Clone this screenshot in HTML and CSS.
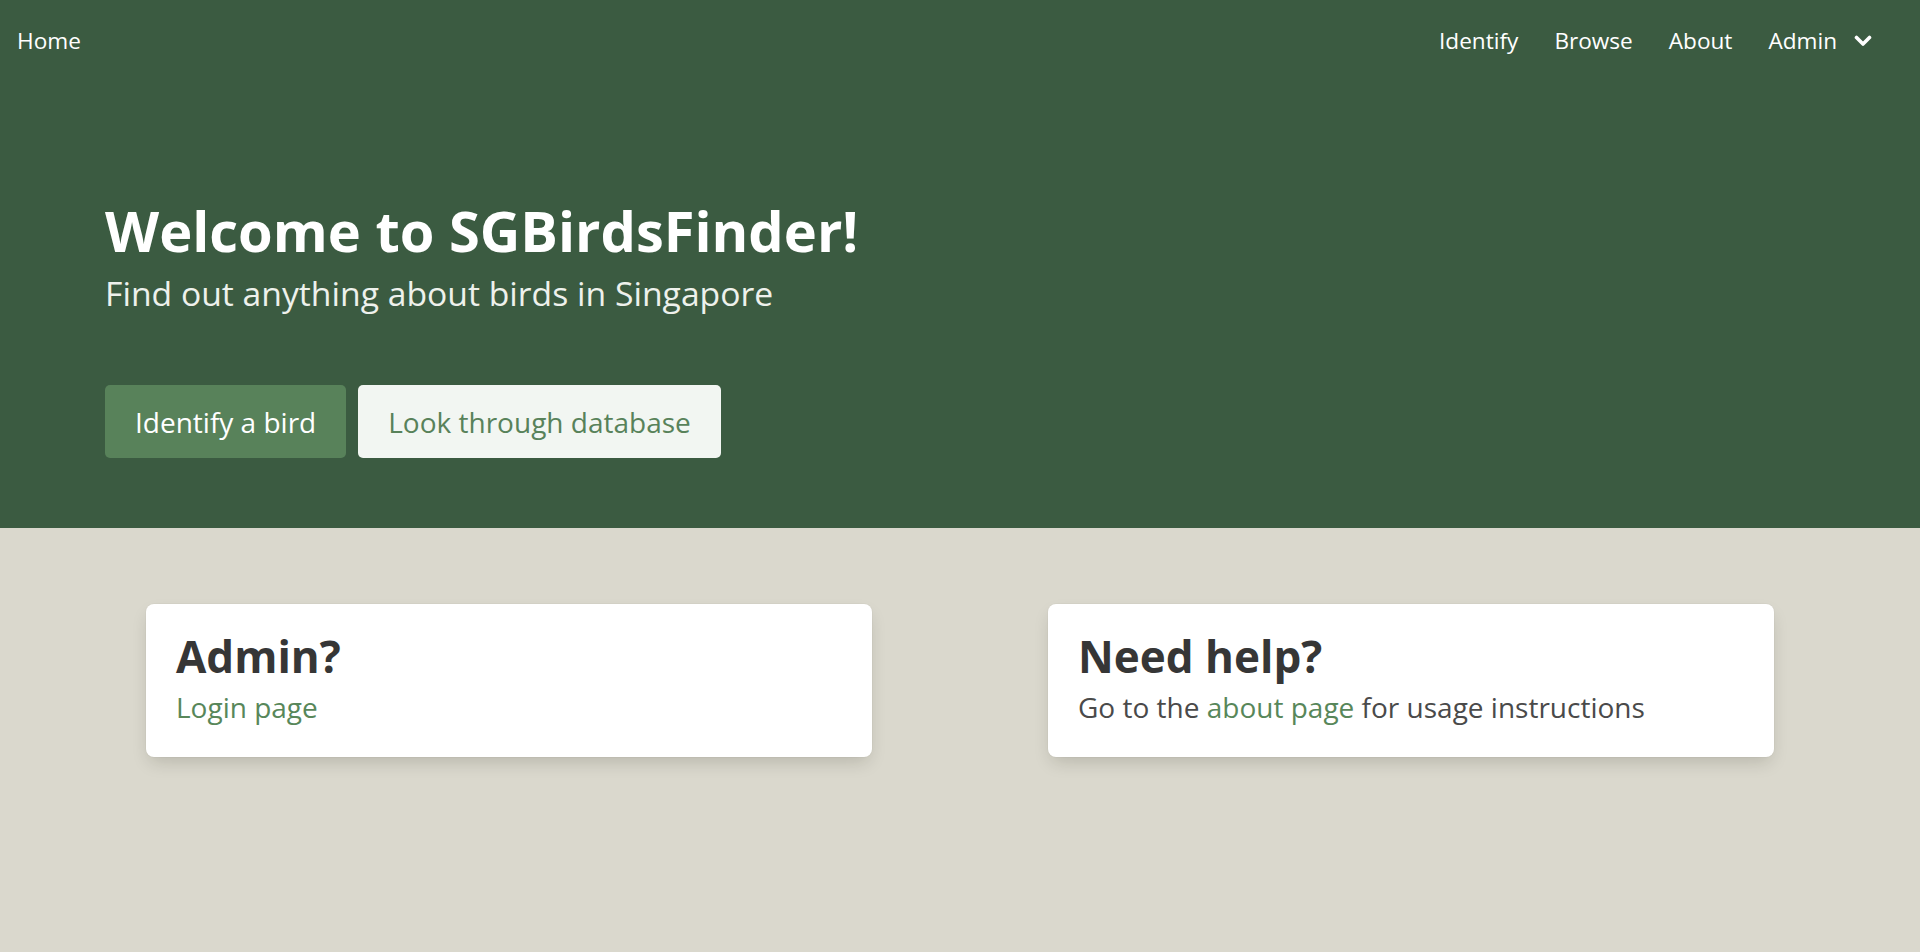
FILE: index.html
```html
<!DOCTYPE html>
<html lang="en">
<head>
<meta charset="utf-8">
<title>SGBirdsFinder</title>
<link rel="stylesheet" href="styles.css">
</head>
<body>
<section class="hero">
  <nav class="navbar">
    <a class="nav-item home" href="#">Home</a>
    <div class="nav-end">
      <a class="nav-item" href="#">Identify</a>
      <a class="nav-item" href="#">Browse</a>
      <a class="nav-item" href="#">About</a>
      <a class="nav-item dropdown" href="#">Admin
        <svg class="chev" width="18" height="12" viewBox="0 0 18 12"><path d="M2.5 2.5 L9 9 L15.5 2.5" fill="none" stroke="#fff" stroke-width="3.6" stroke-linecap="round" stroke-linejoin="round"/></svg>
      </a>
    </div>
  </nav>
  <div class="hero-body">
    <h1 class="title">Welcome to SGBirdsFinder!</h1>
    <p class="subtitle">Find out anything about birds in Singapore</p>
    <div class="buttons">
      <a class="btn btn-primary" href="#">Identify a bird</a>
      <a class="btn btn-light" href="#">Look through database</a>
    </div>
  </div>
</section>
<section class="cards">
  <div class="card">
    <h2 class="card-title">Admin?</h2>
    <p class="card-text"><a href="#">Login page</a></p>
  </div>
  <div class="card">
    <h2 class="card-title">Need help?</h2>
    <p class="card-text">Go to the <a href="#">about page</a> for usage instructions</p>
  </div>
</section>
</body>
</html>
```
FILE: styles.css
```css
html, body {
  margin: 0;
  padding: 0;
}
body {
  background: #dad8cd;
  font-family: "Open Sans", "Noto Sans", sans-serif;
  min-height: 100vh;
}
a { text-decoration: none; }

.hero {
  background: #3b5b41;
  height: 528px;
  display: flex;
  flex-direction: column;
}
.navbar {
  height: 82px;
  display: flex;
  align-items: center;
  justify-content: space-between;
  padding: 0 48px 0 17px;
}
.nav-item {
  color: #fff;
  font-size: 22.6px;
  line-height: 1;
}
.nav-end {
  display: flex;
  align-items: center;
  gap: 36px;
}
.dropdown {
  display: flex;
  align-items: center;
  gap: 17px;
}
.chev { display: block; }

.hero-body {
  padding: 0 0 0 105px;
}
.title {
  margin: 0;
  padding-top: 116px;
  color: #fff;
  font-weight: 700;
  font-size: 56px;
  line-height: 64px;
}
.subtitle {
  margin: 11px 0 0;
  color: #eef1ec;
  font-size: 33.7px;
  line-height: 40px;
}
.buttons {
  display: flex;
  gap: 12px;
  margin-top: 72px;
}
.btn {
  height: 73px;
  box-sizing: border-box;
  display: flex;
  align-items: center;
  padding: 0 30px;
  border-radius: 5px;
  font-size: 28px;
}
.btn-primary {
  background: #58825a;
  color: #fff;
}
.btn-light {
  background: #f2f6f2;
  color: #58825a;
}

.cards {
  display: grid;
  grid-template-columns: 1fr 1fr;
  gap: 176px;
  padding: 76px 146px 0;
}
.card {
  background: #fff;
  border-radius: 8px;
  height: 153px;
  box-sizing: border-box;
  padding: 26px 30px 0;
  box-shadow: 0 8px 18px -4px rgba(20, 20, 10, 0.18), 0 0 0 1px rgba(10, 10, 10, 0.02);
}
.card-title {
  margin: 0;
  color: #363636;
  font-weight: 700;
  font-size: 44px;
  line-height: 52px;
}
.card-text {
  margin: 8px 0 0;
  color: #4a4a4a;
  font-size: 28px;
  line-height: 35px;
}
.card-text a { color: #58875a; }
```
